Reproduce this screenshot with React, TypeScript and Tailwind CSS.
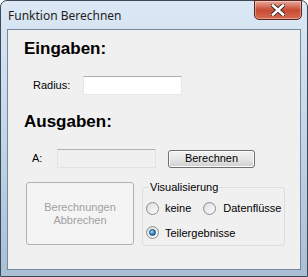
import React from 'react';

const ui = { fontFamily: '"Liberation Sans", Arial, sans-serif' };

function Radio({ checked = false }: { checked?: boolean }) {
  return (
    <span className="flex h-[13px] w-[13px] items-center justify-center rounded-full border border-[#8e8f8f] bg-linear-to-br from-[#d6d6d6] to-[#fbfbfb]">
      <span className="flex h-[9px] w-[9px] items-center justify-center rounded-full bg-linear-to-br from-[#e1e1e1] to-[#fafafa]">
        {checked && (
          <span className="h-[7px] w-[7px] rounded-full border border-[#1c4d75] bg-[radial-gradient(circle_at_35%_35%,#9ee1ff,#1a7fc1_60%,#0b4a7a)]" />
        )}
      </span>
    </span>
  );
}

export default function App() {
  return (
    <div className="flex h-[277px] w-[308px] flex-col rounded-t-[7px] border border-[#3c4a58] bg-linear-to-b from-[#dce8f4] via-[#c2d5e9] to-[#a9bfd4] px-[6px] pb-[6px]">
      {/* Title bar */}
      <div className="flex h-[28px] items-start justify-between">
        <span
          className="mt-[6px] pl-[1px] text-[12px] text-[#1e1e1e]"
          style={{ fontFamily: '"Segoe UI", "Noto Sans", sans-serif' }}
        >
          Funktion Berechnen
        </span>
        <div className="mr-[-1px] mt-[-1px] flex h-[20px] w-[48px] items-center justify-center rounded-b-[5px] border border-[#58261f] bg-linear-to-b from-[#e8a89c] via-[#c94a33] to-[#d66a52] shadow-[inset_0_0_0_1px_rgba(255,255,255,0.35)]">
          <svg width="14" height="12" viewBox="0 0 14 12">
            <path
              d="M2 1.5 L12 10.5 M12 1.5 L2 10.5"
              stroke="#3b2a28"
              strokeWidth="4.4"
              strokeLinecap="square"
            />
            <path
              d="M2 1.5 L12 10.5 M12 1.5 L2 10.5"
              stroke="#ffffff"
              strokeWidth="2.6"
              strokeLinecap="square"
            />
          </svg>
        </div>
      </div>

      {/* Client area */}
      <div
        className="flex flex-1 flex-col border border-[#7588a0] bg-[#f0f0f0] pl-[16px] text-[11px] text-black"
        style={ui}
      >
        <div className="mt-[9px] h-[19px] text-[17px] leading-[19px] font-bold">
          Eingaben:
        </div>

        <div className="mt-[18px] flex h-[19px] items-center">
          <span className="w-[59px] pl-[9px]">Radius:</span>
          <div className="h-[19px] w-[99px] border border-[#e3e9ef] border-t-[#abadb3] bg-white" />
        </div>

        <div className="mt-[17px] h-[19px] text-[17px] leading-[19px] font-bold">
          Ausgaben:
        </div>

        <div className="mt-[18px] flex h-[19px] items-center">
          <span className="w-[33px] pl-[8px]">A:</span>
          <div className="h-[19px] w-[99px] border border-[#e2e3ea] border-t-[#adb2b5] bg-[#f0f0f0]" />
          <button className="ml-[12px] flex h-[18px] w-[87px] items-center justify-center rounded-[3px] border border-[#707070] bg-linear-to-b from-[#f2f2f2] via-[#e6e6e6] to-[#cfcfcf] text-[11px] shadow-[inset_0_0_0_1px_#fcfcfc]">
            Berechnen
          </button>
        </div>

        <div className="mt-[14px] flex">
          <button className="ml-[2px] flex h-[63px] w-[108px] flex-col items-center justify-center rounded-[3px] border border-[#adb2b5] bg-[#f4f4f4] text-[11px] leading-[13px] text-[#a0a0a0]">
            <span>Berechnungen</span>
            <span>Abbrechen</span>
          </button>

          <fieldset className="-mt-[1px] ml-[8px] h-[65px] w-[143px] rounded-[3px] border border-[#d5dfe5]">
            <legend className="ml-[6px] px-[1px] leading-[13px]">Visualisierung</legend>
            <div className="mt-[6px] flex items-center">
              <span className="ml-[3px]">
                <Radio />
              </span>
              <span className="ml-[6px]">keine</span>
              <span className="ml-[12px]">
                <Radio />
              </span>
              <span className="ml-[7px]">Datenflüsse</span>
            </div>
            <div className="mt-[8px] flex items-center">
              <span className="ml-[3px]">
                <Radio checked />
              </span>
              <span className="ml-[6px]">Teilergebnisse</span>
            </div>
          </fieldset>
        </div>
      </div>
    </div>
  );
}
